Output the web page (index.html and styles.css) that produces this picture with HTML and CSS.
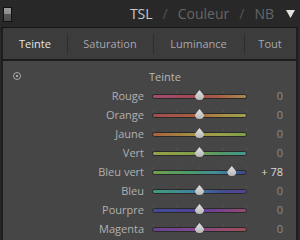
FILE: index.html
```html
<!DOCTYPE html>
<html lang="fr">
<head>
    <meta charset="UTF-8">
    <title>TSL / Couleur / NB</title>
    <link rel="stylesheet" href="styles.css">
</head>
<body>

    <div class="topbar">
        <span class="toggle"></span>
        <div class="modes">
            <span class="mode active">TSL</span>
            <span class="slash">/</span>
            <span class="mode">Couleur</span>
            <span class="slash">/</span>
            <span class="mode">NB</span>
        </div>
        <svg class="arrow" width="9" height="8" viewBox="0 0 9 8"><path d="M0 0 H9 L4.5 8 Z" fill="#e2e2e2"/></svg>
    </div>

    <div class="panel">
        <div class="tabs">
            <div class="tab active">Teinte</div>
            <div class="tab">Saturation</div>
            <div class="tab">Luminance</div>
            <div class="tab">Tout</div>
        </div>

        <div class="content">
            <div class="head">
                <span class="target"></span>
                <span class="head-title">Teinte</span>
            </div>

            <div class="row">
                <span class="label">Rouge</span>
                <div class="slider"><div class="track t-rouge"></div><span class="thumb" style="left: 50%"></span></div>
                <span class="value">0</span>
            </div>
            <div class="row">
                <span class="label">Orange</span>
                <div class="slider"><div class="track t-orange"></div><span class="thumb" style="left: 50%"></span></div>
                <span class="value">0</span>
            </div>
            <div class="row">
                <span class="label">Jaune</span>
                <div class="slider"><div class="track t-jaune"></div><span class="thumb" style="left: 50%"></span></div>
                <span class="value">0</span>
            </div>
            <div class="row">
                <span class="label">Vert</span>
                <div class="slider"><div class="track t-vert"></div><span class="thumb" style="left: 50%"></span></div>
                <span class="value">0</span>
            </div>
            <div class="row">
                <span class="label">Bleu vert</span>
                <div class="slider"><div class="track t-bleuvert"></div><span class="thumb" style="left: 84%"></span></div>
                <span class="value changed">+ 78</span>
            </div>
            <div class="row">
                <span class="label">Bleu</span>
                <div class="slider"><div class="track t-bleu"></div><span class="thumb" style="left: 50%"></span></div>
                <span class="value">0</span>
            </div>
            <div class="row">
                <span class="label">Pourpre</span>
                <div class="slider"><div class="track t-pourpre"></div><span class="thumb" style="left: 50%"></span></div>
                <span class="value">0</span>
            </div>
            <div class="row">
                <span class="label">Magenta</span>
                <div class="slider"><div class="track t-magenta"></div><span class="thumb" style="left: 50%"></span></div>
                <span class="value">0</span>
            </div>
        </div>
    </div>

</body>
</html>
```

FILE: styles.css
```css
body {
    margin: 0;
    width: 300px;
    height: 240px;
    overflow: hidden;
    background-color: #282828;
    font-family: 'Open Sans', 'DejaVu Sans', sans-serif;
}

/* top header */
.topbar {
    height: 27px;
    display: flex;
    align-items: center;
    padding: 0 5px 0 3px;
    box-sizing: border-box;
}

.toggle {
    width: 7px;
    height: 13px;
    border: 1px solid #111;
    background: linear-gradient(#9a9a9a 0, #8a8a8a 50%, #555 50%, #4e4e4e 100%);
    margin-top: 1px;
}

.modes {
    margin-left: auto;
    display: flex;
    gap: 10px;
    font-size: 14px;
    color: #666;
}

.mode.active {
    color: #c8c8c8;
}

.slash {
    color: #555;
}

.arrow {
    margin-left: 12px;
}

/* panel */
.panel {
    margin-left: 1px;
    width: 297px;
    height: 213px;
    border-top: 1px solid #151515;
    border-left: 2px solid #1e1e1e;
    border-right: 2px solid #1e1e1e;
    box-sizing: border-box;
    background-color: #464646;
}

.tabs {
    display: grid;
    grid-template-columns: 64px 86px 91px 1fr;
    height: 31px;
    background-color: #3c3c3c;
    border-bottom: 2px solid #1c1c1c;
    font-size: 11px;
    color: #a6a8ae;
}

.tab {
    display: flex;
    align-items: center;
    justify-content: center;
    position: relative;
}

.tab + .tab::before {
    content: "";
    position: absolute;
    left: 0;
    top: 6px;
    bottom: 5px;
    width: 1px;
    background-color: #2e2e2e;
}

.tab.active {
    color: #e6e6e6;
}

.content {
    padding-top: 5px;
}

.head {
    height: 20px;
    display: flex;
    align-items: center;
    font-size: 11px;
    color: #b8b8b8;
}

.target {
    width: 6px;
    height: 6px;
    border: 1px solid #a8a8a8;
    border-radius: 50%;
    margin-left: 10px;
    position: relative;
}

.target::after {
    content: "";
    position: absolute;
    left: 2px;
    top: 2px;
    width: 2px;
    height: 2px;
    background-color: #a8a8a8;
}

.head-title {
    margin-left: 128px;
}

.row {
    display: grid;
    grid-template-columns: 141px 95px 1fr;
    column-gap: 8px;
    align-items: center;
    height: 19px;
    font-size: 11px;
}

.label {
    text-align: right;
    color: #b0b0b0;
}

.slider {
    position: relative;
    height: 11px;
    display: flex;
    align-items: center;
    background-image:
        linear-gradient(#555, #555),
        linear-gradient(#525252, #525252),
        linear-gradient(#555, #555),
        linear-gradient(#525252, #525252),
        linear-gradient(#555, #555);
    background-size: 1px 2px;
    background-position: 1px 1px, 25% 1px, 50% 1px, 75% 1px, 94px 1px;
    background-repeat: no-repeat;
}

.track {
    width: 100%;
    height: 3px;
    border: 1px solid #2a2a2a;
    border-radius: 3px;
    box-sizing: content-box;
    margin-top: 2px;
}

.t-rouge { background: linear-gradient(to right, #a04a72, #a24a52 45%, #a85e42 70%, #a8884c); }
.t-orange { background: linear-gradient(to right, #a24a52, #a8603f 45%, #a88a44 70%, #9ca24c); }
.t-jaune { background: linear-gradient(to right, #a8623f, #a49044 45%, #9ca24a 70%, #7c9e4c); }
.t-vert { background: linear-gradient(to right, #98a048, #80a04a 45%, #52986c 75%, #40988e); }
.t-bleuvert { background: linear-gradient(to right, #729e48, #4c9a6c 40%, #408a9c 70%, #3e428a); }
.t-bleu { background: linear-gradient(to right, #409a7e, #40869a 40%, #424c92 75%, #5a4092); }
.t-pourpre { background: linear-gradient(to right, #404c98, #4e4294 40%, #744290 70%, #944a70); }
.t-magenta { background: linear-gradient(to right, #664292, #824890 45%, #944c70, #a04c56); }

.thumb {
    position: absolute;
    top: 0;
    width: 9px;
    height: 10px;
    margin-left: -4.5px;
    background: linear-gradient(#e4e4e4, #b6b6b6);
    clip-path: path("M4.5 0 L9 5.5 Q9 10 4.5 10 Q0 10 0 5.5 Z");
}

.value {
    text-align: right;
    padding-right: 13px;
    color: #8c8c8c;
}

.value.changed {
    color: #dcdcdc;
}
```
